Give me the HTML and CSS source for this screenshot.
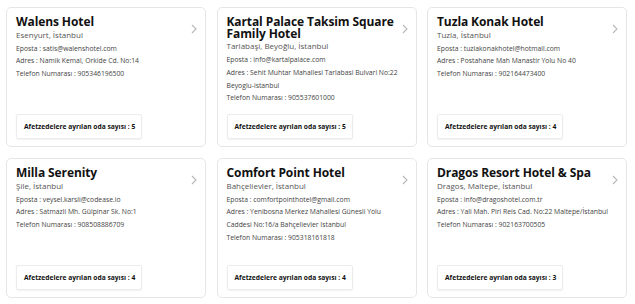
FILE: index.html
```html
<!DOCTYPE html>
<html lang="tr">
<head>
<meta charset="utf-8">
<title>Oteller</title>
<link rel="stylesheet" href="styles.css">
</head>
<body>
<div class="grid">
  <div class="card">
    <svg class="chev" viewBox="0 0 6 10"><path d="M1 1l4 4-4 4" fill="none" stroke="#b8b8b8" stroke-width="1.1"/></svg>
    <div class="title">Walens Hotel</div>
    <div class="loc">Esenyurt, İstanbul</div>
    <div class="info">
      <div>Eposta : satis@walenshotel.com</div>
      <div>Adres : Namik Kemal, Orkide Cd. No:14</div>
      <div>Telefon Numarası : 905346196500</div>
    </div>
    <div class="btn">Afetzedelere ayrılan oda sayısı : 5</div>
  </div>
  <div class="card">
    <svg class="chev" viewBox="0 0 6 10"><path d="M1 1l4 4-4 4" fill="none" stroke="#b8b8b8" stroke-width="1.1"/></svg>
    <div class="title">Kartal Palace Taksim Square Family Hotel</div>
    <div class="loc">Tarlabaşi, Beyoğlu, İstanbul</div>
    <div class="info">
      <div>Eposta : info@kartalpalace.com</div>
      <div>Adres : Sehit Muhtar Mahallesi Tarlabasi Bulvari No:22 Beyoglu-istanbul</div>
      <div>Telefon Numarası : 905537601000</div>
    </div>
    <div class="btn">Afetzedelere ayrılan oda sayısı : 5</div>
  </div>
  <div class="card">
    <svg class="chev" viewBox="0 0 6 10"><path d="M1 1l4 4-4 4" fill="none" stroke="#b8b8b8" stroke-width="1.1"/></svg>
    <div class="title">Tuzla Konak Hotel</div>
    <div class="loc">Tuzla, İstanbul</div>
    <div class="info">
      <div>Eposta : tuzlakonakhotel@hotmail.com</div>
      <div>Adres : Postahane Mah Manastir Yolu No 40</div>
      <div>Telefon Numarası : 902164473400</div>
    </div>
    <div class="btn">Afetzedelere ayrılan oda sayısı : 4</div>
  </div>
  <div class="card">
    <svg class="chev" viewBox="0 0 6 10"><path d="M1 1l4 4-4 4" fill="none" stroke="#b8b8b8" stroke-width="1.1"/></svg>
    <div class="title">Milla Serenity</div>
    <div class="loc">Şile, İstanbul</div>
    <div class="info">
      <div>Eposta : veysel.karsli@codease.io</div>
      <div>Adres : Satmazli Mh. Gülpinar Sk. No:1</div>
      <div>Telefon Numarası : 908508886709</div>
    </div>
    <div class="btn">Afetzedelere ayrılan oda sayısı : 4</div>
  </div>
  <div class="card">
    <svg class="chev" viewBox="0 0 6 10"><path d="M1 1l4 4-4 4" fill="none" stroke="#b8b8b8" stroke-width="1.1"/></svg>
    <div class="title">Comfort Point Hotel</div>
    <div class="loc">Bahçelievler, İstanbul</div>
    <div class="info">
      <div>Eposta : comfortpointhotel@gmail.com</div>
      <div>Adres : Yenibosna Merkez Mahallesi Günesli Yolu Caddesi No:16/a Bahçelievler Istanbul</div>
      <div>Telefon Numarası : 905318161818</div>
    </div>
    <div class="btn">Afetzedelere ayrılan oda sayısı : 4</div>
  </div>
  <div class="card">
    <svg class="chev" viewBox="0 0 6 10"><path d="M1 1l4 4-4 4" fill="none" stroke="#b8b8b8" stroke-width="1.1"/></svg>
    <div class="title">Dragos Resort Hotel &amp; Spa</div>
    <div class="loc">Dragos, Maltepe, İstanbul</div>
    <div class="info">
      <div>Eposta : info@dragoshotel.com.tr</div>
      <div>Adres : Yali Mah. Piri Reis Cad. No:22 Maltepe/İstanbul</div>
      <div>Telefon Numarası : 902163700505</div>
    </div>
    <div class="btn">Afetzedelere ayrılan oda sayısı : 3</div>
  </div>
</div>
</body>
</html>
```

FILE: styles.css
```css
html, body {
  margin: 0;
  background: #fff;
}
body {
  font-family: "Open Sans", "Noto Sans", sans-serif;
  color: #222;
}
.grid {
  display: grid;
  grid-template-columns: repeat(3, 200px);
  grid-auto-rows: 140px;
  column-gap: 10.5px;
  row-gap: 11px;
  padding: 7px 0 0 6px;
}
.card {
  position: relative;
  box-sizing: border-box;
  border: 1px solid #e6e6e6;
  border-radius: 5px;
  padding: 8px 8px 7px 9px;
  display: flex;
  flex-direction: column;
  background: #fff;
}
.chev {
  position: absolute;
  top: 16px;
  right: 8px;
  width: 6px;
  height: 10px;
}
.title {
  font-size: 12px;
  font-weight: 700;
  line-height: 11.5px;
  color: #111;
  letter-spacing: -0.1px;
}
.loc {
  font-size: 8px;
  line-height: 12px;
  color: #555;
  margin-top: 1px;
}
.info {
  font-size: 6.8px;
  line-height: 12.8px;
  color: #444;
  margin-top: 2px;
}
.btn {
  margin-top: auto;
  align-self: flex-start;
  border: 1px solid #ececec;
  border-radius: 2px;
  box-shadow: 0 1px 2px rgba(0,0,0,0.06);
  font-size: 6.7px;
  font-weight: 700;
  color: #111;
  padding: 8px 6px 8px 7px;
  line-height: 7px;
}
```
